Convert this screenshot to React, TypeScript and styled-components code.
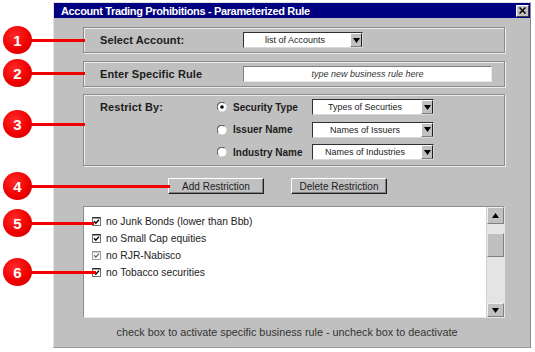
import React from "react";
import styled, { createGlobalStyle } from "styled-components";

const GlobalStyle = createGlobalStyle`
  html, body { margin: 0; padding: 0; background: #fff; }
  body { font-family: "Liberation Sans", Arial, sans-serif; }
  * { box-sizing: border-box; }
`;

const Page = styled.div`
  position: relative;
  width: 535px;
  height: 352px;
  overflow: hidden;
  padding: 2px 0 0 53px;
`;

const Dialog = styled.div`
  width: 478px;
  height: 346px;
  background: #c0c0c0;
  border: 1px solid;
  border-color: #e2e2e2 #8a8a8a #9a9a9a #e2e2e2;
  display: flex;
  flex-direction: column;
`;

const TitleBar = styled.div`
  height: 15px;
  background: #000080;
  display: flex;
  align-items: center;
  justify-content: space-between;
  padding: 0 1px 0 7px;
  color: #fff;
  font-weight: bold;
  font-size: 11px;
  letter-spacing: -0.35px;
`;

const CloseBox = styled.div`
  width: 13px;
  height: 12px;
  background: #c0c0c0;
  border: 1px solid;
  border-color: #fff #404040 #404040 #fff;
  display: flex;
  align-items: center;
  justify-content: center;
`;

const Body = styled.div`
  flex: 1;
  display: flex;
  flex-direction: column;
  padding: 9px 25px 0 29px;
`;

const Group = styled.div<{ $h: number; $mt: number }>`
  height: ${(p) => p.$h}px;
  margin-top: ${(p) => p.$mt}px;
  border: 1px solid #8c8c8c;
  box-shadow: 1px 1px 0 #ececec, inset 1px 1px 0 #ececec;
  display: flex;
  align-items: center;
  padding-left: 16px;
`;

const Label = styled.div<{ $w: number }>`
  width: ${(p) => p.$w}px;
  font-size: 11px;
  font-weight: bold;
  color: #1c1c1c;
  letter-spacing: 0.1px;
`;

const SelectBox = styled.div<{ $w: number }>`
  width: ${(p) => p.$w}px;
  height: 16px;
  display: flex;
  background: #fff;
  border: 1px solid;
  border-color: #303030 #d8d8d8 #d8d8d8 #303030;
`;

const SelectText = styled.div`
  flex: 1;
  display: flex;
  align-items: center;
  justify-content: center;
  font-size: 9px;
  color: #222;
  padding-right: 4px;
`;

const ArrowButton = styled.div`
  width: 12px;
  height: 100%;
  background: #c0c0c0;
  border: 1px solid;
  border-color: #fff #202020 #808080 #fff;
  display: flex;
  align-items: center;
  justify-content: center;
`;

const TextInput = styled.div`
  width: 249px;
  height: 16px;
  background: #fff;
  border: 1px solid;
  border-color: #808080 #e8e8e8 #e8e8e8 #808080;
  display: flex;
  align-items: center;
  justify-content: center;
  font-size: 9px;
  font-style: italic;
  color: #333;
`;

const RestrictGroup = styled(Group)`
  align-items: flex-start;
  padding-top: 4px;
`;

const RestrictGrid = styled.div`
  display: grid;
  grid-template-columns: 117px 95px 122px;
  grid-auto-rows: 16px;
  row-gap: 6.5px;
  align-items: center;
`;

const RadioRow = styled.div`
  display: flex;
  align-items: center;
  gap: 6px;
  font-size: 10px;
  font-weight: bold;
  color: #1c1c1c;
`;

const ButtonRow = styled.div`
  display: flex;
  gap: 27px;
  margin-top: 12px;
  padding-left: 85px;
`;

const Button = styled.div`
  width: 96px;
  height: 16px;
  background: #c0c0c0;
  border: 1px solid;
  border-color: #fff #202020 #202020 #fff;
  box-shadow: inset -1px -1px 0 #808080;
  display: flex;
  align-items: center;
  justify-content: center;
  font-size: 10px;
  color: #222;
`;

const ListBox = styled.div`
  margin-top: 12px;
  height: 112px;
  background: #fff;
  border: 1px solid;
  border-color: #8c8c8c #e6e6e6 #e6e6e6 #8c8c8c;
  display: flex;
`;

const Items = styled.div`
  flex: 1;
  padding: 6px 0 0 8px;
  display: flex;
  flex-direction: column;
`;

const Item = styled.div`
  height: 17px;
  display: flex;
  align-items: center;
  gap: 5px;
  font-size: 10.3px;
  color: #222;
`;

const ScrollBar = styled.div`
  width: 18px;
  display: flex;
  flex-direction: column;
  background: #e4e4e4;
  border-left: 1px solid #d0d0d0;
`;

const ScrollBtn = styled.div<{ $h: number }>`
  height: ${(p) => p.$h}px;
  background: #c0c0c0;
  border: 1px solid;
  border-color: #f0f0f0 #808080 #808080 #f0f0f0;
  display: flex;
  align-items: center;
  justify-content: center;
`;

const Thumb = styled.div`
  height: 24px;
  margin-top: 9px;
  background: #c0c0c0;
  border: 1px solid;
  border-color: #e8e8e8 #808080 #808080 #e8e8e8;
`;

const Track = styled.div`
  flex: 1;
`;

const Hint = styled.div`
  flex: 1;
  display: flex;
  align-items: center;
  justify-content: center;
  font-size: 10.8px;
  color: #333;
  padding: 0 14px 2px 0;
`;

const Callout = styled.div<{ $y: number; $len: number }>`
  position: absolute;
  left: 3px;
  top: ${(p) => p.$y - 14}px;
  width: ${(p) => p.$len - 3}px;
  height: 28px;
`;

const Badge = styled.div`
  position: absolute;
  left: 0;
  top: 0;
  width: 29px;
  height: 28px;
  border-radius: 50%;
  background: radial-gradient(circle at 40% 35%, #ff2a2a 0%, #f00000 55%, #c80000 100%);
  color: #fff;
  font-weight: bold;
  font-size: 15px;
  display: flex;
  align-items: center;
  justify-content: center;
  z-index: 1;
`;

const Line = styled.div`
  position: absolute;
  left: 24px;
  right: 0;
  top: 13px;
  height: 2.5px;
  background: #f00000;
`;

const Arrow = ({ up }: { up?: boolean }) => (
  <svg width="7" height="5" viewBox="0 0 7 5">
    {up ? <polygon points="0,5 7,5 3.5,0" fill="#000" /> : <polygon points="0,0 7,0 3.5,5" fill="#000" />}
  </svg>
);

const Radio = ({ on }: { on?: boolean }) => (
  <svg width="10" height="10" viewBox="0 0 10 10">
    <circle cx="5" cy="5" r="4.5" fill="#fff" />
    <path d="M1.2 7.5 A4.5 4.5 0 0 1 7.5 1.2" stroke="#606060" strokeWidth="1.2" fill="none" />
    {on && <circle cx="5" cy="5" r="1.8" fill="#000" />}
  </svg>
);

const Check = ({ light }: { light?: boolean }) => (
  <svg width="9" height="9" viewBox="0 0 9 9">
    <rect x="0.5" y="0.5" width="8" height="8" fill="#fff" stroke={light ? "#a0a0a0" : "#707070"} />
    <line x1="0.5" y1="0.8" x2="8.5" y2="0.8" stroke={light ? "#909090" : "#202020"} strokeWidth="1.3" />
    <polyline points="2,4.3 3.8,6.3 7,2.6" fill="none" stroke={light ? "#707070" : "#000"} strokeWidth="1.4" />
  </svg>
);

const Dropdown = ({ text, w }: { text: string; w: number }) => (
  <SelectBox $w={w}>
    <SelectText>{text}</SelectText>
    <ArrowButton>
      <Arrow />
    </ArrowButton>
  </SelectBox>
);

const callouts = [
  { n: 1, y: 40, len: 85 },
  { n: 2, y: 73, len: 85 },
  { n: 3, y: 124, len: 85 },
  { n: 4, y: 186, len: 170 },
  { n: 5, y: 223, len: 94 },
  { n: 6, y: 272, len: 96 },
];

const rules = [
  { t: "no Junk Bonds (lower than Bbb)" },
  { t: "no Small Cap equities" },
  { t: "no RJR-Nabisco", light: true },
  { t: "no Tobacco securities" },
];

export default function App() {
  return (
    <>
      <GlobalStyle />
      <Page>
        <Dialog>
          <TitleBar>
            <span>Account Trading Prohibitions - Parameterized Rule</span>
            <CloseBox>
              <svg width="7" height="7" viewBox="0 0 7 7">
                <path d="M0.5 0.5 L6.5 6.5 M6.5 0.5 L0.5 6.5" stroke="#000" strokeWidth="1.5" />
              </svg>
            </CloseBox>
          </TitleBar>
          <Body>
            <Group $h={26} $mt={0}>
              <Label $w={143}>Select Account:</Label>
              <Dropdown text="list of Accounts" w={120} />
            </Group>
            <Group $h={26} $mt={8}>
              <Label $w={143}>Enter Specific Rule</Label>
              <TextInput>type new business rule here</TextInput>
            </Group>
            <RestrictGroup $h={72} $mt={7}>
              <RestrictGrid>
                <Label $w={117}>Restrict By:</Label>
                <RadioRow>
                  <Radio on />
                  Security Type
                </RadioRow>
                <Dropdown text="Types of Securties" w={122} />
                <span />
                <RadioRow>
                  <Radio />
                  Issuer Name
                </RadioRow>
                <Dropdown text="Names of Issuers" w={122} />
                <span />
                <RadioRow>
                  <Radio />
                  Industry Name
                </RadioRow>
                <Dropdown text="Names of Industries" w={122} />
              </RestrictGrid>
            </RestrictGroup>
            <ButtonRow>
              <Button>Add Restriction</Button>
              <Button>Delete Restriction</Button>
            </ButtonRow>
            <ListBox>
              <Items>
                {rules.map((r) => (
                  <Item key={r.t}>
                    <Check light={r.light} />
                    {r.t}
                  </Item>
                ))}
              </Items>
              <ScrollBar>
                <ScrollBtn $h={17}>
                  <Arrow up />
                </ScrollBtn>
                <Thumb />
                <Track />
                <ScrollBtn $h={14}>
                  <Arrow />
                </ScrollBtn>
              </ScrollBar>
            </ListBox>
            <Hint>check box to activate specific business rule - uncheck box to deactivate</Hint>
          </Body>
        </Dialog>
        {callouts.map((c) => (
          <Callout key={c.n} $y={c.y} $len={c.len}>
            <Line />
            <Badge>{c.n}</Badge>
          </Callout>
        ))}
      </Page>
    </>
  );
}
